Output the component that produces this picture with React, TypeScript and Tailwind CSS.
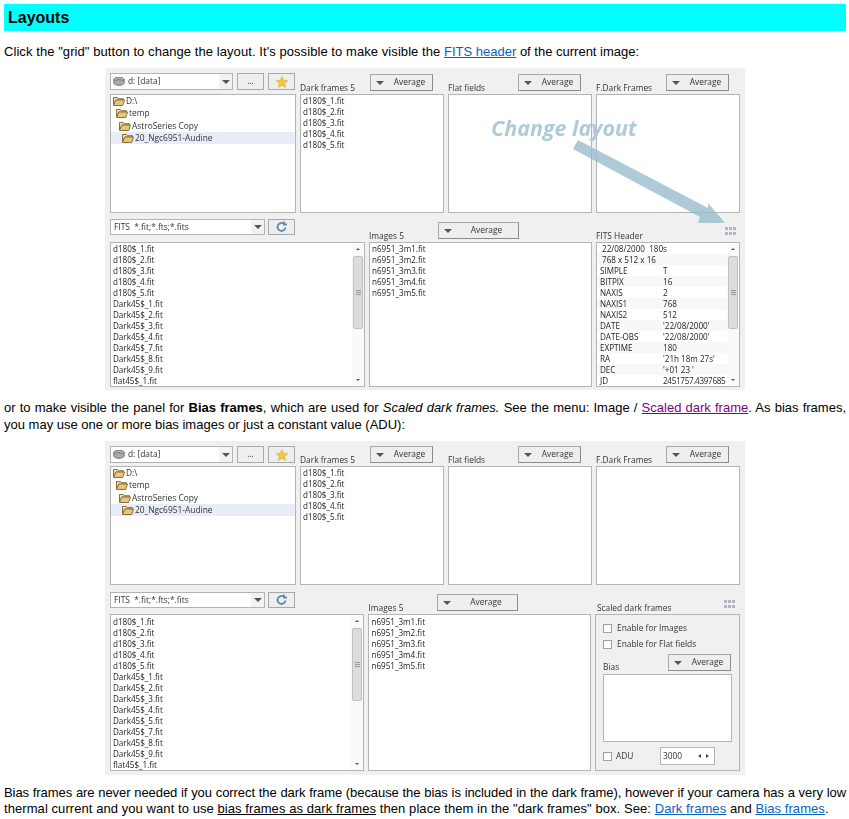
import React from 'react';

const darks = ['d180$_1.fit', 'd180$_2.fit', 'd180$_3.fit', 'd180$_4.fit', 'd180$_5.fit'];
const images = ['n6951_3m1.fit', 'n6951_3m2.fit', 'n6951_3m3.fit', 'n6951_3m4.fit', 'n6951_3m5.fit'];
const filesShort = [...darks, 'Dark45$_1.fit', 'Dark45$_2.fit', 'Dark45$_3.fit', 'Dark45$_4.fit', 'Dark45$_7.fit', 'Dark45$_8.fit', 'Dark45$_9.fit', 'flat45$_1.fit'];
const filesLong = [...darks, 'Dark45$_1.fit', 'Dark45$_2.fit', 'Dark45$_3.fit', 'Dark45$_4.fit', 'Dark45$_5.fit', 'Dark45$_7.fit', 'Dark45$_8.fit', 'Dark45$_9.fit', 'flat45$_1.fit'];
const folders = ['D:\\', 'temp', 'AstroSeries Copy', '20_Ngc6951-Audine'];
const fits = [
  ['SIMPLE', 'T'],
  ['BITPIX', '16'],
  ['NAXIS', '2'],
  ['NAXIS1', '768'],
  ['NAXIS2', '512'],
  ['DATE', "'22/08/2000'"],
  ['DATE-OBS', "'22/08/2000'"],
  ['EXPTIME', '180'],
  ['RA', "'21h 18m 27s'"],
  ['DEC', "'+01 23  '"],
  ['JD', '2451757.4397685'],
];

function Folder() {
  return (
    <svg width="12" height="10" viewBox="0 0 12 10" className="shrink-0">
      <path d="M0.5 1.5h4l1 1.2h5v1.3H3L0.5 9z" fill="#f0e0b4" stroke="#86703c" />
      <path d="M0.5 9.5L2.8 4h8.7l-1.8 5.500z" fill="#e8c878" stroke="#86703c" />
    </svg>
  );
}

function Caret() {
  return <span className="w-0 h-0 border-x-[4px] border-x-transparent border-t-[4px] border-t-[#555]" />;
}

function AverageButton({ className }: { className: string }) {
  return (
    <div className={`flex items-center h-[17px] bg-[#eeeeee] border border-[#a8a8a8] border-b-[#8c8c8c] border-r-[#8c8c8c] pl-[5px] ${className}`}>
      <Caret />
      <span className="flex-1 text-center pl-[3px] text-[#333]">Average</span>
    </div>
  );
}

function GridIcon() {
  return (
    <svg width="11" height="8" viewBox="0 0 11 8">
      {[0, 4, 8].map(x =>
        [0, 5].map(y => <rect key={`${x}-${y}`} x={x} y={y} width="3" height="3" fill="#b4b4c6" />)
      )}
    </svg>
  );
}

function Box({ children, className = '' }: { children?: React.ReactNode; className?: string }) {
  return <div className={`bg-white border border-[#b4b4b4] overflow-hidden ${className}`}>{children}</div>;
}

function Rows({ items, pad = false }: { items: string[]; pad?: boolean }) {
  return (
    <div className={`pl-[2px] text-[8.1px] text-[#222] ${pad ? 'pt-[1px]' : ''}`}>
      {items.map((item, i) => (
        <div key={i} className="h-[11px] leading-[11px]">{item}</div>
      ))}
    </div>
  );
}

function Scrollbar() {
  return (
    <div className="w-[12px] self-stretch flex flex-col items-center shrink-0 bg-[#fafafa]">
      <span className="mt-[5px] w-0 h-0 border-x-[2px] border-x-transparent border-b-[2px] border-b-[#555]" />
      <div className="mt-[6px] w-[10px] h-[73px] bg-[#dcdcdc] border border-[#c0c0c0] rounded-[2px] flex flex-col items-center justify-center gap-[1px]">
        <span className="w-[5px] h-px bg-[#999]" />
        <span className="w-[5px] h-px bg-[#999]" />
        <span className="w-[5px] h-px bg-[#999]" />
      </div>
      <span className="mt-auto mb-[5px] w-0 h-0 border-x-[2px] border-x-transparent border-t-[2px] border-t-[#555]" />
    </div>
  );
}

function FrameColumn({ label, compact }: { label: string; compact: boolean }) {
  return (
    <div className="flex flex-col w-[144px]">
      <div className={`relative flex items-end ${compact ? 'h-[20px]' : 'h-[21px]'}`}>
        <span className="leading-[13px] text-[#333]">{label}</span>
        <AverageButton className="absolute bottom-[3px] left-[70px] w-[63px]" />
      </div>
      {label.startsWith('Dark') ? (
        <Box className="flex-1"><Rows items={darks} /></Box>
      ) : (
        <Box className="flex-1" />
      )}
    </div>
  );
}

function FitsHeader() {
  return (
    <div className="flex flex-col w-[144px]">
      <div className="h-[23px] flex items-end justify-between pr-[4px]">
        <span className="leading-[13px] text-[#333]">FITS Header</span>
        <div className="mb-[7px]"><GridIcon /></div>
      </div>
      <Box className="flex-1 flex">
        <div className="flex-1 min-w-0 text-[8.1px] text-[#222] whitespace-nowrap">
          <div className="h-[11px] leading-[11px] pl-[5px]">22/08/2000&nbsp;&nbsp;180s</div>
          <div className="h-[11px] leading-[11px] pl-[5px] bg-[#f8f8f8]">768 x 512 x 16</div>
          {fits.map(([key, value], i) => (
            <div key={key} className={`h-[11px] leading-[11px] flex pl-[3px] ${i % 2 === 0 ? '' : 'bg-[#f8f8f8]'}`}>
              <span className="w-[63px] shrink-0">{key}</span>
              <span className={key === 'JD' ? 'tracking-[-0.3px]' : ''}>{value}</span>
            </div>
          ))}
        </div>
        <Scrollbar />
      </Box>
    </div>
  );
}

function ScaledDark() {
  return (
    <div className="flex flex-col w-[145px] shrink-0">
      <div className="h-[22px] flex items-end justify-between pl-[2px] pr-[5px]">
        <span className="leading-[13px] text-[#333]">Scaled dark frames</span>
        <div className="mb-[6px]"><GridIcon /></div>
      </div>
      <div className="flex-1 border border-[#b4b4b4] px-[7px] pt-[8px] flex flex-col text-[#333]">
        <label className="flex items-center gap-[5px] h-[10px]">
          <span className="w-[9px] h-[9px] bg-white border border-[#a0a0a0]" />
          Enable for Images
        </label>
        <label className="flex items-center gap-[5px] h-[10px] mt-[6px]">
          <span className="w-[9px] h-[9px] bg-white border border-[#a0a0a0]" />
          Enable for Flat fields
        </label>
        <div className="flex justify-between items-end h-[25px]">
          <span className="leading-[13px] mb-[1px]">Bias</span>
          <AverageButton className="w-[63px] mr-[1px] mb-[3px]" />
        </div>
        <Box className="h-[68px]" />
        <div className="flex items-center mt-[5px] h-[18px]">
          <span className="w-[9px] h-[9px] bg-white border border-[#a0a0a0]" />
          <span className="ml-[4px] w-[44px]">ADU</span>
          <div className="w-[55px] h-[18px] bg-white border border-[#b4b4b4] flex items-center pl-[2px]">
            <span className="flex-1">3000</span>
            <span className="w-0 h-0 border-y-[2px] border-y-transparent border-r-[3px] border-r-[#444] mr-[5px]" />
            <span className="w-0 h-0 border-y-[2px] border-y-transparent border-l-[3px] border-l-[#444] mr-[5px]" />
          </div>
        </div>
      </div>
    </div>
  );
}

function Panel({ files, compact = false, children }: { files: string[]; compact?: boolean; children: React.ReactNode }) {
  return (
    <div className={`ml-[101px] w-[640px] bg-[#f0f0f0] px-[5px] pt-[5px] relative blur-[0.25px] text-[8.4px] [font-family:'Open_Sans','Noto_Sans',sans-serif] ${compact ? 'pb-[4px]' : 'pb-[3px]'}`}>
      <div className={`flex gap-[4px] ${compact ? 'h-[139px]' : 'h-[140px]'}`}>
        <div className="flex flex-col w-[186px]">
          <div className={`flex gap-[4px] items-start ${compact ? 'h-[20px]' : 'h-[21px]'}`}>
            <div className="w-[123px] h-[17px] bg-white border border-[#b4b4b4] flex items-center pl-[2px]">
              <svg width="12" height="9" viewBox="0 0 12 9" className="shrink-0">
                <ellipse cx="6" cy="3" rx="5.500" ry="2.800" fill="#b8b8b8" stroke="#777" />
                <ellipse cx="6" cy="5.500" rx="5.500" ry="2.800" fill="#aaa" stroke="#777" />
              </svg>
              <span className="ml-[3px] flex-1 text-[#333]">d: [data]</span>
              <div className="w-[13px] h-full bg-[#f2f2f2] flex items-center justify-center"><Caret /></div>
            </div>
            <div className="w-[27px] h-[17px] bg-[#eeeeee] border border-[#a8a8a8] flex items-center justify-center leading-none text-[#333]">...</div>
            <div className="w-[27px] h-[17px] bg-[#eeeeee] border border-[#a8a8a8] flex items-center justify-center">
              <svg width="12" height="12" viewBox="0 0 24 24"><path d="M12 1l3.400 7.400 8 .9-6 5.500 1.700 8L12 18.700 4.900 22.800l1.700-8-6-5.500 8-.9z" fill="#f0c83c" stroke="#d2a520" /></svg>
            </div>
          </div>
          <Box className="flex-1 text-[#333]">
            {folders.map((name, i) => (
              <div key={name} className={`h-[12.3px] flex items-center gap-[1px] ${i === 3 ? 'bg-[#e8ecf8]' : ''}`}>
                <span className="shrink-0" style={{ width: i * 3 + 1 }} />
                <Folder />
                <span>{name}</span>
              </div>
            ))}
          </Box>
        </div>
        <FrameColumn label="Dark frames 5" compact={compact} />
        <FrameColumn label="Flat fields" compact={compact} />
        <FrameColumn label="F.Dark Frames" compact={compact} />
      </div>
      <div className={`flex gap-[4px] ${compact ? 'mt-[7px]' : 'mt-[6px]'}`}>
        <div className="flex flex-col w-[255px]">
          <div className={`flex gap-[3px] items-start ${compact ? 'h-[22px]' : 'h-[23px]'}`}>
            <div className="w-[155px] h-[16px] bg-white border border-[#b4b4b4] flex items-center pl-[3px]">
              <span className="flex-1 text-[#333] whitespace-pre">FITS  *.fit;*.fts;*.fits</span>
              <div className="w-[13px] h-full bg-[#f2f2f2] flex items-center justify-center"><Caret /></div>
            </div>
            <div className="w-[27px] h-[16px] bg-[#eeeeee] border border-[#a8a8a8] flex items-center justify-center">
              <svg width="13" height="12" viewBox="0 0 13 12" fill="none" stroke="#5f8cab" strokeWidth="1.800">
                <path d="M10.500 6.500a4 4 0 1 1-1.400-3.600" />
                <path d="M9 0.500v3h3" />
              </svg>
            </div>
          </div>
          <Box className="flex-1 flex">
            <div className="flex-1"><Rows items={files} pad={compact} /></div>
            <Scrollbar />
          </Box>
        </div>
        <div className="flex flex-col w-[223px]">
          <div className={`relative flex items-end ${compact ? 'h-[22px]' : 'h-[23px]'}`}>
            <span className="leading-[13px] text-[#333]">Images 5</span>
            <AverageButton className="absolute bottom-[3px] left-[69px] w-[81px]" />
          </div>
          <Box className="flex-1"><Rows items={images} pad={compact} /></Box>
        </div>
        {children}
      </div>
    </div>
  );
}

export default function App() {
  return (
    <div className="w-[849px] h-[819px] overflow-hidden bg-white text-black text-[13px] leading-[16.5px] px-[4px] pt-[4px] [font-family:'Liberation_Sans',Arial,sans-serif]">
      <h1 className="h-[27px] w-[842px] bg-[#00ffff] pl-[4px] text-[16px] font-bold leading-[27px]">Layouts</h1>
      <p className="mt-[13px] h-[24px]">
        <span className="tracking-[0.07px]">Click the "grid" button to change the layout. It's possible to make visible the</span>{' '}
        <a className="underline text-[#0563c1]">FITS header</a> of the current image:
      </p>
      <Panel files={filesShort}>
        <FitsHeader />
        <div className="absolute left-[386px] top-[48px] text-[21.500px] leading-[24px] font-bold italic text-[#b0cbd7] whitespace-nowrap">Change layout</div>
        <svg width="170" height="100" viewBox="0 0 170 100" className="absolute left-[460px] top-[70px]">
          <polygon points="13,2 143,70 143,65 160,85 133,85 135,79 8,11" fill="#96bbca" fillOpacity="0.78" />
        </svg>
      </Panel>
      <p className="mt-[10px] w-[842px] text-justify">
        or to make visible the panel for <b>Bias frames</b>, which are used for <i>Scaled dark frames.</i> See the menu: Image /{' '}
        <a className="underline text-[#800080]">Scaled dark frame</a>. As bias frames, you may use one or more bias images or just a constant value (ADU):
      </p>
      <div className="h-[8px]" />
      <Panel files={filesLong} compact>
        <ScaledDark />
      </Panel>
      <div className="mt-[10px] w-[842px] leading-[16px]">
        <p className="tracking-[-0.07px] [text-align-last:justify]">
          Bias frames are never needed if you correct the dark frame (because the bias is included in the dark frame), however if your camera has a very low
        </p>
        <p className="tracking-[0.07px]">
          thermal current and you want to use <u>bias frames as dark frames</u> then place them in the "dark frames" box. See:{' '}
          <a className="underline text-[#0563c1]">Dark frames</a> and <a className="underline text-[#0563c1]">Bias frames</a>.
        </p>
      </div>
    </div>
  );
}
